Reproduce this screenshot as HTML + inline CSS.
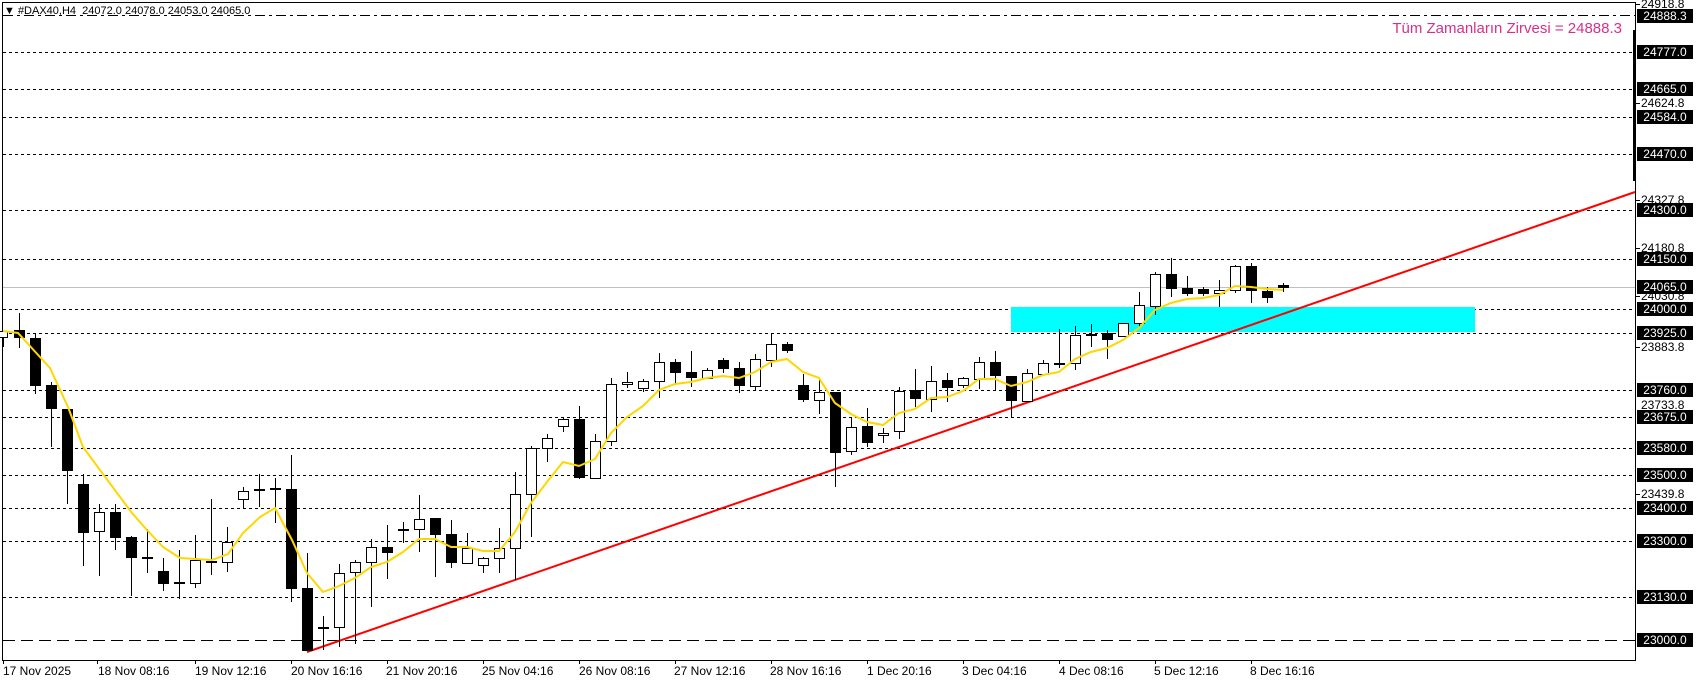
<!DOCTYPE html>
<html><head><meta charset="utf-8"><style>
html,body{margin:0;padding:0;background:#fff;}
body{width:1699px;height:684px;overflow:hidden;position:relative;font-family:"Liberation Sans",sans-serif;}
svg{position:absolute;left:0;top:0;}
.g line{stroke:#000;stroke-width:1;stroke-dasharray:3,3;}
.c line{stroke:#000;stroke-width:1;}
.c rect.w{fill:#fff;stroke:#000;stroke-width:1;}
.c rect.b{fill:#000;}
.lb{position:absolute;left:1637px;width:56px;height:14px;background:#000;color:#fff;font-size:12px;line-height:14px;text-align:center;}
.pl{position:absolute;left:1641px;color:#000;font-size:12px;line-height:14px;}
.tl{position:absolute;top:664px;font-size:12px;color:#000;white-space:nowrap;}
</style></head><body>
<svg width="1699" height="684" shape-rendering="crispEdges">
<rect x="2.5" y="2.5" width="1633" height="658" fill="none" stroke="#000"/>
<g class="g">
<line x1="3" x2="1635" y1="52.5" y2="52.5"/><line x1="3" x2="1635" y1="89.5" y2="89.5"/>
<line x1="3" x2="1635" y1="117.5" y2="117.5"/><line x1="3" x2="1635" y1="154.5" y2="154.5"/>
<line x1="3" x2="1635" y1="210.5" y2="210.5"/><line x1="3" x2="1635" y1="259.5" y2="259.5"/>
<line x1="3" x2="1635" y1="309.5" y2="309.5"/><line x1="3" x2="1635" y1="333.5" y2="333.5"/>
<line x1="3" x2="1635" y1="390.5" y2="390.5"/><line x1="3" x2="1635" y1="417.5" y2="417.5"/>
<line x1="3" x2="1635" y1="448.5" y2="448.5"/><line x1="3" x2="1635" y1="475.5" y2="475.5"/>
<line x1="3" x2="1635" y1="508.5" y2="508.5"/><line x1="3" x2="1635" y1="541.5" y2="541.5"/>
<line x1="3" x2="1635" y1="597.5" y2="597.5"/>
</g>
<line x1="3" x2="1635" y1="15.5" y2="15.5" stroke="#000" stroke-dasharray="10,4,3,4"/>
<line x1="3" x2="1635" y1="640.5" y2="640.5" stroke="#000" stroke-dasharray="12,6"/>
<line x1="3" x2="1635" y1="287.5" y2="287.5" stroke="#c0c0c0"/>
<rect x="1011" y="307" width="464" height="25" fill="#00ffff"/>
<rect x="1633" y="30" width="3" height="151" fill="#000"/>
<line x1="307" y1="652" x2="1635" y2="192" stroke="#ff0000" stroke-width="2" shape-rendering="auto"/>
<g class="c">
<line x1="3.5" x2="3.5" y1="331" y2="347"/><rect class="w" x="-1.5" y="331.5" width="9" height="6"/>
<line x1="19.5" x2="19.5" y1="313" y2="348"/><rect class="b" x="14" y="330" width="11" height="8"/>
<line x1="35.5" x2="35.5" y1="333" y2="394"/><rect class="b" x="30" y="338" width="11" height="48"/>
<line x1="51.5" x2="51.5" y1="382" y2="447"/><rect class="b" x="46" y="385" width="11" height="24"/>
<line x1="67.5" x2="67.5" y1="409" y2="504"/><rect class="b" x="62" y="409" width="11" height="62"/>
<line x1="83.5" x2="83.5" y1="474" y2="566"/><rect class="b" x="78" y="484" width="11" height="49"/>
<line x1="99.5" x2="99.5" y1="504" y2="576"/><rect class="w" x="94.5" y="512.5" width="10" height="19"/>
<line x1="115.5" x2="115.5" y1="504" y2="550"/><rect class="b" x="110" y="512" width="11" height="26"/>
<line x1="131.5" x2="131.5" y1="536" y2="596"/><rect class="b" x="126" y="537" width="11" height="21"/>
<line x1="147.5" x2="147.5" y1="529" y2="573"/><rect class="b" x="142" y="557" width="11" height="2"/>
<line x1="163.5" x2="163.5" y1="558" y2="591"/><rect class="b" x="158" y="571" width="11" height="13"/>
<line x1="179.5" x2="179.5" y1="550" y2="599"/><rect class="b" x="174" y="582" width="11" height="2"/>
<line x1="195.5" x2="195.5" y1="535" y2="588"/><rect class="w" x="190.5" y="560.5" width="10" height="23"/>
<line x1="211.5" x2="211.5" y1="499" y2="575"/><rect class="b" x="206" y="561" width="11" height="2"/>
<line x1="227.5" x2="227.5" y1="527" y2="572"/><rect class="w" x="222.5" y="542.5" width="10" height="20"/>
<line x1="243.5" x2="243.5" y1="487" y2="509"/><rect class="w" x="238.5" y="491.5" width="10" height="8"/>
<line x1="259.5" x2="259.5" y1="474" y2="507"/><rect class="b" x="254" y="489" width="11" height="2"/>
<line x1="275.5" x2="275.5" y1="478" y2="523"/><rect class="b" x="270" y="488" width="11" height="2"/>
<line x1="291.5" x2="291.5" y1="455" y2="602"/><rect class="b" x="286" y="489" width="11" height="100"/>
<line x1="307.5" x2="307.5" y1="553" y2="651"/><rect class="b" x="302" y="588" width="11" height="63"/>
<line x1="323.5" x2="323.5" y1="616" y2="650"/><rect class="b" x="318" y="627" width="11" height="2"/>
<line x1="339.5" x2="339.5" y1="564" y2="647"/><rect class="w" x="334.5" y="573.5" width="10" height="54"/>
<line x1="355.5" x2="355.5" y1="560" y2="644"/><rect class="w" x="350.5" y="562.5" width="10" height="10"/>
<line x1="371.5" x2="371.5" y1="539" y2="607"/><rect class="w" x="366.5" y="547.5" width="10" height="15"/>
<line x1="387.5" x2="387.5" y1="525" y2="579"/><rect class="b" x="382" y="547" width="11" height="6"/>
<line x1="403.5" x2="403.5" y1="522" y2="543"/><rect class="b" x="398" y="529" width="11" height="2"/>
<line x1="419.5" x2="419.5" y1="495" y2="552"/><rect class="w" x="414.5" y="519.5" width="10" height="10"/>
<line x1="435.5" x2="435.5" y1="518" y2="577"/><rect class="b" x="430" y="518" width="11" height="17"/>
<line x1="451.5" x2="451.5" y1="520" y2="568"/><rect class="b" x="446" y="534" width="11" height="29"/>
<line x1="467.5" x2="467.5" y1="533" y2="563"/><rect class="w" x="462.5" y="548.5" width="10" height="15"/>
<line x1="483.5" x2="483.5" y1="557" y2="573"/><rect class="w" x="478.5" y="558.5" width="10" height="7"/>
<line x1="499.5" x2="499.5" y1="528" y2="573"/><rect class="w" x="494.5" y="548.5" width="10" height="10"/>
<line x1="515.5" x2="515.5" y1="472" y2="580"/><rect class="w" x="510.5" y="494.5" width="10" height="54"/>
<line x1="531.5" x2="531.5" y1="446" y2="537"/><rect class="w" x="526.5" y="448.5" width="10" height="46"/>
<line x1="547.5" x2="547.5" y1="434" y2="462"/><rect class="w" x="542.5" y="438.5" width="10" height="10"/>
<line x1="563.5" x2="563.5" y1="417" y2="432"/><rect class="w" x="558.5" y="419.5" width="10" height="7"/>
<line x1="579.5" x2="579.5" y1="406" y2="479"/><rect class="b" x="574" y="419" width="11" height="59"/>
<line x1="595.5" x2="595.5" y1="434" y2="479"/><rect class="w" x="590.5" y="441.5" width="10" height="37"/>
<line x1="611.5" x2="611.5" y1="378" y2="446"/><rect class="w" x="606.5" y="384.5" width="10" height="57"/>
<line x1="627.5" x2="627.5" y1="372" y2="388"/><rect class="w" x="622.5" y="382.5" width="10" height="2"/>
<line x1="643.5" x2="643.5" y1="379" y2="392"/><rect class="w" x="638.5" y="381.5" width="10" height="7"/>
<line x1="659.5" x2="659.5" y1="353" y2="398"/><rect class="w" x="654.5" y="362.5" width="10" height="19"/>
<line x1="675.5" x2="675.5" y1="359" y2="383"/><rect class="b" x="670" y="362" width="11" height="11"/>
<line x1="691.5" x2="691.5" y1="351" y2="387"/><rect class="b" x="686" y="372" width="11" height="6"/>
<line x1="707.5" x2="707.5" y1="368" y2="378"/><rect class="w" x="702.5" y="370.5" width="10" height="8"/>
<line x1="723.5" x2="723.5" y1="358" y2="373"/><rect class="b" x="718" y="360" width="11" height="9"/>
<line x1="739.5" x2="739.5" y1="362" y2="393"/><rect class="b" x="734" y="368" width="11" height="18"/>
<line x1="755.5" x2="755.5" y1="354" y2="391"/><rect class="w" x="750.5" y="359.5" width="10" height="27"/>
<line x1="771.5" x2="771.5" y1="334" y2="367"/><rect class="w" x="766.5" y="344.5" width="10" height="16"/>
<line x1="787.5" x2="787.5" y1="342" y2="353"/><rect class="b" x="782" y="344" width="11" height="7"/>
<line x1="803.5" x2="803.5" y1="374" y2="402"/><rect class="b" x="798" y="385" width="11" height="15"/>
<line x1="819.5" x2="819.5" y1="380" y2="414"/><rect class="w" x="814.5" y="392.5" width="10" height="8"/>
<line x1="835.5" x2="835.5" y1="392" y2="487"/><rect class="b" x="830" y="392" width="11" height="61"/>
<line x1="851.5" x2="851.5" y1="417" y2="455"/><rect class="w" x="846.5" y="427.5" width="10" height="24"/>
<line x1="867.5" x2="867.5" y1="408" y2="447"/><rect class="b" x="862" y="426" width="11" height="17"/>
<line x1="883.5" x2="883.5" y1="428" y2="443"/><rect class="w" x="878.5" y="433.5" width="10" height="2"/>
<line x1="899.5" x2="899.5" y1="387" y2="439"/><rect class="w" x="894.5" y="391.5" width="10" height="40"/>
<line x1="915.5" x2="915.5" y1="369" y2="407"/><rect class="b" x="910" y="390" width="11" height="9"/>
<line x1="931.5" x2="931.5" y1="366" y2="412"/><rect class="w" x="926.5" y="381.5" width="10" height="18"/>
<line x1="947.5" x2="947.5" y1="373" y2="402"/><rect class="b" x="942" y="380" width="11" height="8"/>
<line x1="963.5" x2="963.5" y1="377" y2="388"/><rect class="w" x="958.5" y="378.5" width="10" height="7"/>
<line x1="979.5" x2="979.5" y1="357" y2="389"/><rect class="w" x="974.5" y="362.5" width="10" height="17"/>
<line x1="995.5" x2="995.5" y1="351" y2="391"/><rect class="b" x="990" y="362" width="11" height="14"/>
<line x1="1011.5" x2="1011.5" y1="376" y2="417"/><rect class="b" x="1006" y="376" width="11" height="25"/>
<line x1="1027.5" x2="1027.5" y1="369" y2="401"/><rect class="w" x="1022.5" y="373.5" width="10" height="28"/>
<line x1="1043.5" x2="1043.5" y1="360" y2="374"/><rect class="w" x="1038.5" y="363.5" width="10" height="11"/>
<line x1="1059.5" x2="1059.5" y1="329" y2="368"/><rect class="b" x="1054" y="363" width="11" height="2"/>
<line x1="1075.5" x2="1075.5" y1="326" y2="370"/><rect class="w" x="1070.5" y="335.5" width="10" height="28"/>
<line x1="1091.5" x2="1091.5" y1="324" y2="347"/><rect class="b" x="1086" y="334" width="11" height="2"/>
<line x1="1107.5" x2="1107.5" y1="330" y2="359"/><rect class="b" x="1102" y="333" width="11" height="7"/>
<line x1="1123.5" x2="1123.5" y1="323" y2="336"/><rect class="w" x="1118.5" y="323.5" width="10" height="13"/>
<line x1="1139.5" x2="1139.5" y1="292" y2="327"/><rect class="w" x="1134.5" y="305.5" width="10" height="18"/>
<line x1="1155.5" x2="1155.5" y1="272" y2="315"/><rect class="w" x="1150.5" y="274.5" width="10" height="32"/>
<line x1="1171.5" x2="1171.5" y1="258" y2="297"/><rect class="b" x="1166" y="274" width="11" height="15"/>
<line x1="1187.5" x2="1187.5" y1="276" y2="296"/><rect class="b" x="1182" y="288" width="11" height="6"/>
<line x1="1203.5" x2="1203.5" y1="287" y2="296"/><rect class="b" x="1198" y="289" width="11" height="5"/>
<line x1="1219.5" x2="1219.5" y1="280" y2="307"/><rect class="w" x="1214.5" y="290.5" width="10" height="3"/>
<line x1="1235.5" x2="1235.5" y1="265" y2="293"/><rect class="w" x="1230.5" y="266.5" width="10" height="24"/>
<line x1="1251.5" x2="1251.5" y1="263" y2="303"/><rect class="b" x="1246" y="266" width="11" height="25"/>
<line x1="1267.5" x2="1267.5" y1="287" y2="303"/><rect class="b" x="1262" y="291" width="11" height="7"/>
<line x1="1283.5" x2="1283.5" y1="283" y2="292"/><rect class="b" x="1278" y="285" width="11" height="3"/>
</g>
<polyline fill="none" stroke="#ffd700" stroke-width="2" shape-rendering="auto" points="3,331 18,333 50,368 68,407 83,447 100,470 132,513 147,530 163,547 180,558 212,560 228,554 243,533 260,517 275,508 292,540 307,573 323,592 339,586 355,578 371,567 387,562 403,552 419,539 435,539 451,547 467,547 483,551 499,551 515,532 531,503 547,482 563,462 579,466 595,459 611,433 627,417 643,406 659,390 675,384 691,382 707,378 723,376 739,378 755,372 771,362 787,359 803,372 819,378 835,403 851,414 867,422 883,425 899,413 915,409 931,398 947,397 963,391 979,379 995,379 1011,386 1027,382 1043,375 1059,372 1075,359 1091,352 1107,348 1123,340 1139,328 1155,310 1171,303 1187,299 1203,298 1219,295 1235,286 1251,287 1267,289 1283,290"/>
<g stroke="#000">
<line x1="1636" x2="1640" y1="4.5" y2="4.5"/><line x1="1636" x2="1640" y1="103.5" y2="103.5"/>
<line x1="1636" x2="1640" y1="200.5" y2="200.5"/><line x1="1636" x2="1640" y1="248.5" y2="248.5"/>
<line x1="1636" x2="1640" y1="296.5" y2="296.5"/><line x1="1636" x2="1640" y1="347.5" y2="347.5"/>
<line x1="1636" x2="1640" y1="494.5" y2="494.5"/>
<line x1="3.5" x2="3.5" y1="660" y2="664"/><line x1="97.5" x2="97.5" y1="660" y2="664"/><line x1="195.5" x2="195.5" y1="660" y2="664"/><line x1="291.5" x2="291.5" y1="660" y2="664"/><line x1="387.5" x2="387.5" y1="660" y2="664"/><line x1="483.5" x2="483.5" y1="660" y2="664"/><line x1="579.5" x2="579.5" y1="660" y2="664"/><line x1="675.5" x2="675.5" y1="660" y2="664"/><line x1="771.5" x2="771.5" y1="660" y2="664"/><line x1="867.5" x2="867.5" y1="660" y2="664"/><line x1="963.5" x2="963.5" y1="660" y2="664"/><line x1="1059.5" x2="1059.5" y1="660" y2="664"/><line x1="1155.5" x2="1155.5" y1="660" y2="664"/><line x1="1251.5" x2="1251.5" y1="660" y2="664"/>
</g>
</svg>
<div style="position:absolute;left:4px;top:4px;font-size:11px;line-height:14px;color:#000;white-space:nowrap;">&#9660; #DAX40,H4&nbsp; 24072.0 24078.0 24053.0 24065.0</div>
<div style="position:absolute;right:77px;top:20px;font-size:15px;line-height:18px;color:#d6308a;white-space:nowrap;">Tüm Zamanların Zirvesi = 24888.3</div>
<div class="pl" style="top:-3px">24918.8</div>
<div class="pl" style="top:96px">24624.8</div>
<div class="pl" style="top:193px">24327.8</div>
<div class="pl" style="top:241px">24180.8</div>
<div class="pl" style="top:289px">24030.8</div>
<div class="pl" style="top:340px">23883.8</div>
<div class="pl" style="top:398px">23733.8</div>
<div class="pl" style="top:487px">23439.8</div>
<div class="pl" style="top:590px">23143.8</div>
<div class="lb" style="top:9px">24888.3</div>
<div class="lb" style="top:45px">24777.0</div>
<div class="lb" style="top:82px">24665.0</div>
<div class="lb" style="top:110px">24584.0</div>
<div class="lb" style="top:147px">24470.0</div>
<div class="lb" style="top:203px">24300.0</div>
<div class="lb" style="top:252px">24150.0</div>
<div class="lb" style="top:280px">24065.0</div>
<div class="lb" style="top:302px">24000.0</div>
<div class="lb" style="top:326px">23925.0</div>
<div class="lb" style="top:383px">23760.0</div>
<div class="lb" style="top:410px">23675.0</div>
<div class="lb" style="top:441px">23580.0</div>
<div class="lb" style="top:468px">23500.0</div>
<div class="lb" style="top:501px">23400.0</div>
<div class="lb" style="top:534px">23300.0</div>
<div class="lb" style="top:590px">23130.0</div>
<div class="lb" style="top:633px">23000.0</div>
<div class="tl" style="left:3px">17 Nov 2025</div>
<div class="tl" style="left:98px">18 Nov 08:16</div>
<div class="tl" style="left:195px">19 Nov 12:16</div>
<div class="tl" style="left:291px">20 Nov 16:16</div>
<div class="tl" style="left:386px">21 Nov 20:16</div>
<div class="tl" style="left:482px">25 Nov 04:16</div>
<div class="tl" style="left:579px">26 Nov 08:16</div>
<div class="tl" style="left:674px">27 Nov 12:16</div>
<div class="tl" style="left:770px">28 Nov 16:16</div>
<div class="tl" style="left:867px">1 Dec 20:16</div>
<div class="tl" style="left:962px">3 Dec 04:16</div>
<div class="tl" style="left:1059px">4 Dec 08:16</div>
<div class="tl" style="left:1154px">5 Dec 12:16</div>
<div class="tl" style="left:1250px">8 Dec 16:16</div>
</body></html>
